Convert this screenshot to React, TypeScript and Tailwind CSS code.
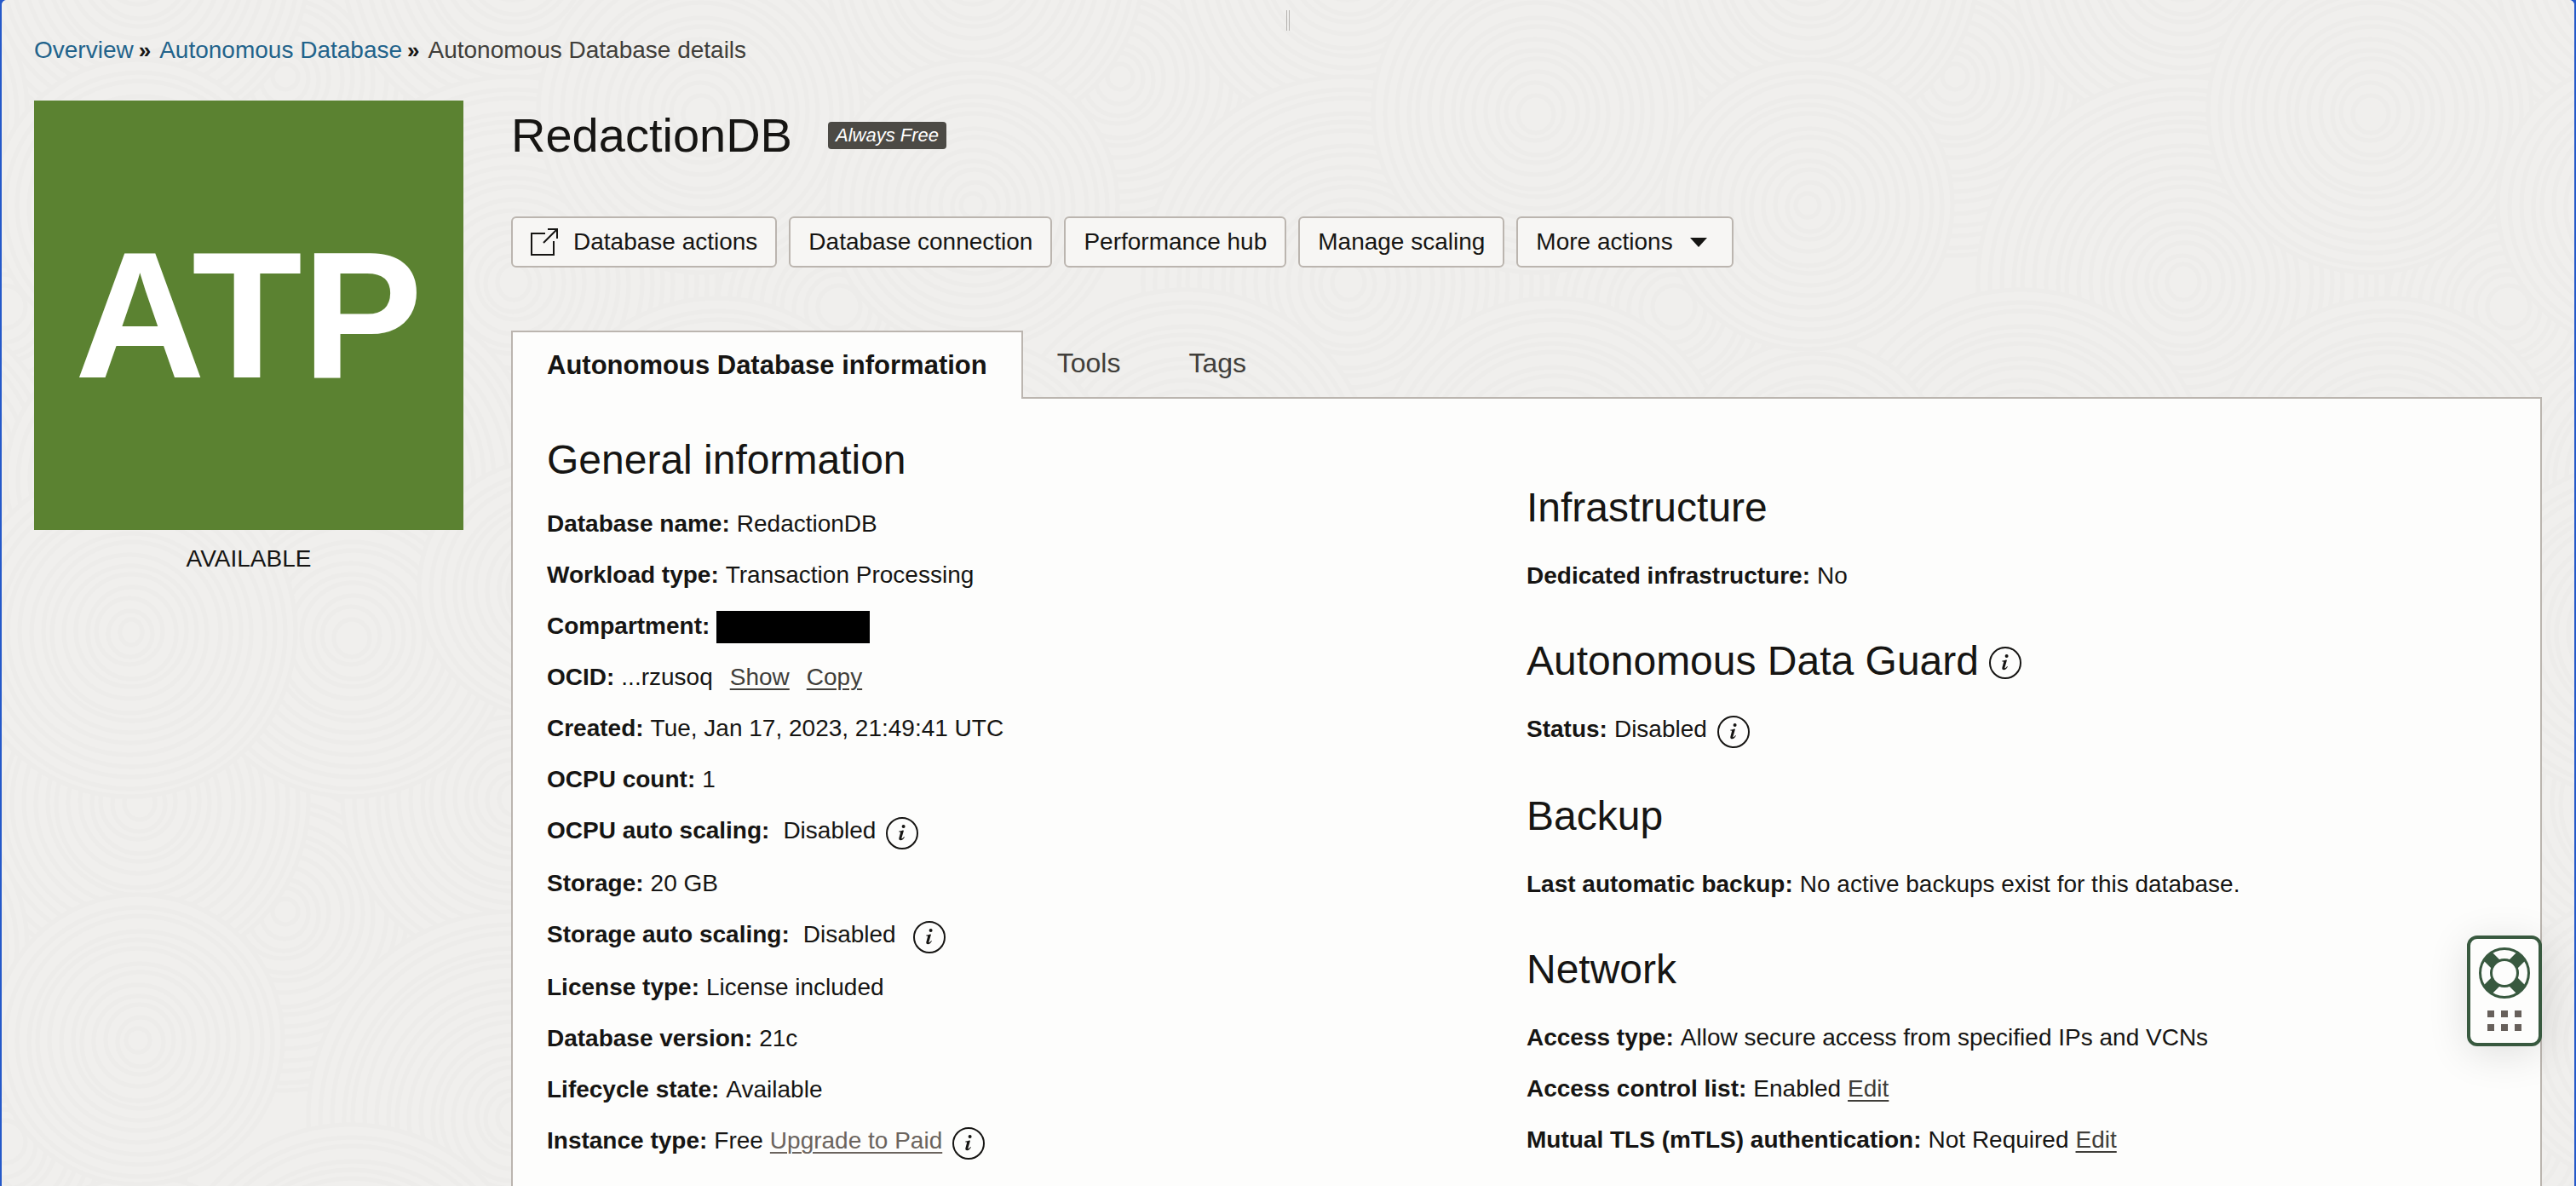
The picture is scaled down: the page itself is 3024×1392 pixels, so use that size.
import React from "react";

const TILE = 980;

const DISCS: [number, number, number][] = [
  [760, 860, 230],
  [330, 90, 210],
  [0, 360, 220],
  [600, 935, 200],
  [600, 330, 240],
  [160, 940, 200],
  [840, 560, 210],
  [410, 560, 220],
  [820, 130, 190],
  [165, 560, 160],
  [410, 745, 190],
  [150, 740, 195],
  [640, 690, 150],
  [160, 240, 170],
];

const WRAP = [-TILE, 0, TILE];

function Ripples() {
  return (
    <svg className="absolute inset-0 h-full w-full" aria-hidden="true">
      <defs>
        <pattern id="ripples" width={TILE} height={TILE} patternUnits="userSpaceOnUse">
          <rect width={TILE} height={TILE} fill="#f0efed" />
          {DISCS.map(([x, y, r], i) =>
            WRAP.map((dx) =>
              WRAP.map((dy) => (
                <g key={`${i}:${dx}:${dy}`} fill="#f0efed" stroke="#edecea" strokeWidth="5">
                  {Array.from({ length: Math.floor(r / 13) }, (_, n) => (
                    <ellipse
                      key={n}
                      cx={x + dx + ((n * 5) % 4)}
                      cy={y + dy + ((n * 3) % 5)}
                      rx={r - n * 13}
                      ry={r - n * 13 + (n % 3)}
                    />
                  ))}
                </g>
              )),
            ),
          )}
        </pattern>
      </defs>
      <rect width="100%" height="100%" fill="url(#ripples)" />
    </svg>
  );
}

function InfoButton({ label, className = "" }: { label: string; className?: string }) {
  return (
    <button type="button" aria-label={label} className={`size-[38px] shrink-0 ${className}`}>
      <svg viewBox="0 0 38 38" className="size-full" fill="none">
        <circle cx="19" cy="19" r="18" stroke="#161513" strokeWidth="2" />
        <circle cx="20.6" cy="11" r="2" fill="#161513" />
        <path
          d="M15.4 16.600c1.600-.1 3-.5 4.400-1.200l1.200.3-2.500 8.600c-.2.7 0 1 .4 1 .7 0 1.400-.9 2.200-2.200l.8.5c-1.200 2.200-2.700 3.700-4.600 3.700-1.600 0-2.300-1.100-1.900-2.700l1.600-6.200c.1-.6 0-.8-.5-.9l-1.200-.1z"
          fill="#161513"
        />
      </svg>
    </button>
  );
}

function TextLink({ children, muted = false }: { children: React.ReactNode; muted?: boolean }) {
  return (
    <a
      href="#"
      className={`underline decoration-2 underline-offset-4 ${muted ? "text-[#6b645e]" : "text-[#403e3a]"}`}
    >
      {children}
    </a>
  );
}

function Field({ label, children }: { label: string; children: React.ReactNode }) {
  return (
    <div className="mb-7 flex items-start whitespace-nowrap">
      <dt className="mr-2 font-bold">{label}:</dt>
      <dd className="flex items-start">{children}</dd>
    </div>
  );
}

function Section({ title, info, children }: { title: string; info?: string; children: React.ReactNode }) {
  return (
    <section className="pb-7">
      <div className="mb-9 flex items-center gap-3">
        <h2 className="text-[48px] leading-[56px]">{title}</h2>
        {info && <InfoButton label={info} className="mt-1" />}
      </div>
      <dl className="flow-root">{children}</dl>
    </section>
  );
}

function ActionButton({ children }: { children: React.ReactNode }) {
  return (
    <button
      type="button"
      className="flex h-[60px] items-center rounded-md border-2 border-[#bbb5af] bg-[#f7f6f4] px-[21px] whitespace-nowrap"
    >
      {children}
    </button>
  );
}

function HelpWidget() {
  return (
    <button
      type="button"
      aria-label="Support"
      className="fixed top-[1098px] right-10 flex h-[130px] w-[88px] flex-col items-center gap-3.5 rounded-xl border-4 border-[#38593f] bg-[#fdfdfc] pt-2.5 shadow-[0_8px_48px_rgba(0,0,0,0.12)]"
    >
      <svg viewBox="0 0 60 60" className="size-[60px]" fill="none">
        <g stroke="#38593f" strokeWidth="14">
          <path d="M9.500 9.500 20 20M50.500 9.500 40 20M9.500 50.500 20 40M50.500 50.500 40 40" />
        </g>
        <circle cx="30" cy="30" r="28.500" stroke="#38593f" strokeWidth="3" />
        <circle cx="30" cy="30" r="15.500" fill="#fdfdfc" stroke="#38593f" strokeWidth="3" />
      </svg>
      <span className="grid grid-cols-3 gap-2">
        {[0, 1, 2, 3, 4, 5].map((n) => (
          <span key={n} className="size-2 bg-[#67605b]" />
        ))}
      </span>
    </button>
  );
}

export default function App() {
  return (
    <div className="min-h-screen bg-[#2559c9] px-0.5 font-['Liberation_Sans',Arial,sans-serif] text-[28px] leading-8 text-[#161513]">
      <div className="relative flex min-h-screen flex-col overflow-hidden rounded-md bg-[#f0efed]">
        <Ripples />
        <div
          aria-hidden="true"
          className="absolute top-3 left-1/2 h-6 w-1 -translate-x-1/2 border-x border-[#b4b2af]"
        />
        <div className="relative flex grow flex-col px-[38px] pt-[43px]">
          <nav aria-label="Breadcrumb">
            <ol className="flex items-center">
              <li className="text-[#22638b]">
                <a href="#">Overview</a>
              </li>
              <li aria-hidden="true" className="mr-2.5 ml-1.5 text-[26px] font-bold">
                »
              </li>
              <li className="text-[#22638b]">
                <a href="#">Autonomous Database</a>
              </li>
              <li aria-hidden="true" className="mr-2.5 ml-1.5 text-[26px] font-bold">
                »
              </li>
              <li className="text-[#403e3a]">Autonomous Database details</li>
            </ol>
          </nav>

          <div className="mt-[43px] flex grow gap-14">
            <aside className="w-[504px] shrink-0 text-center">
              <div className="flex h-[504px] items-center justify-center bg-[#5b8231] text-[212px] leading-none font-bold text-white">
                ATP
              </div>
              <p className="mt-0.5 leading-[64px]">AVAILABLE</p>
            </aside>

            <main className="flex min-w-0 grow flex-col">
              <header className="flex items-center gap-[42px] pt-[9px]">
                <h1 className="text-[56px] leading-[64px]">RedactionDB</h1>
                <span className="rounded-sm bg-[#4c4a45] px-[9px] text-[22px] leading-8 text-white italic">
                  Always Free
                </span>
              </header>

              <div className="mt-[63px] flex gap-3.5">
                <ActionButton>
                  <svg viewBox="0 0 32 32" className="mr-[18px] size-8" fill="none" stroke="#161513" strokeWidth="2">
                    <path d="M17 6H1v25h26V15M15 17 30 2M20 1h11v11" />
                  </svg>
                  Database actions
                </ActionButton>
                <ActionButton>Database connection</ActionButton>
                <ActionButton>Performance hub</ActionButton>
                <ActionButton>Manage scaling</ActionButton>
                <ActionButton>
                  More actions
                  <svg viewBox="0 0 20 11" className="mr-2 ml-5 h-[11px] w-5" fill="#161513">
                    <path d="M0 0h20L10 11z" />
                  </svg>
                </ActionButton>
              </div>

              <div role="tablist" className="relative z-10 mt-[74px] -mb-0.5 flex text-[32px] text-[#403e3a]">
                <button
                  type="button"
                  role="tab"
                  aria-selected="true"
                  className="h-20 border-2 border-b-0 border-[#bbb5af] bg-[#fdfdfc] px-10 text-[31px] font-bold whitespace-nowrap text-[#161513]"
                >
                  Autonomous Database information
                </button>
                <button type="button" role="tab" aria-selected="false" className="h-[76px] px-10">
                  Tools
                </button>
                <button type="button" role="tab" aria-selected="false" className="h-[76px] px-10">
                  Tags
                </button>
              </div>

              <div
                role="tabpanel"
                className="grid grow grid-cols-2 border-2 border-b-0 border-[#bbb5af] bg-[#fdfdfc] px-10 pt-11"
              >
                <div>
                  <h2 className="mb-[31px] text-[48px] leading-[56px]">General information</h2>
                  <dl>
                    <Field label="Database name">RedactionDB</Field>
                    <Field label="Workload type">Transaction Processing</Field>
                    <Field label="Compartment">
                      <span className="-mt-0.5 -mb-1 h-[38px] w-[180px] bg-black" />
                    </Field>
                    <Field label="OCID">
                      ...rzusoq
                      <span className="ml-5 flex gap-5">
                        <TextLink>Show</TextLink>
                        <TextLink>Copy</TextLink>
                      </span>
                    </Field>
                    <Field label="Created">Tue, Jan 17, 2023, 21:49:41 UTC</Field>
                    <Field label="OCPU count">1</Field>
                    <Field label="OCPU auto scaling">
                      <span className="mr-3 ml-2">Disabled</span>
                      <InfoButton label="About OCPU auto scaling" className="-mb-1" />
                    </Field>
                    <Field label="Storage">20 GB</Field>
                    <Field label="Storage auto scaling">
                      <span className="mr-5 ml-2">Disabled</span>
                      <InfoButton label="About storage auto scaling" className="-mb-1" />
                    </Field>
                    <Field label="License type">License included</Field>
                    <Field label="Database version">21c</Field>
                    <Field label="Lifecycle state">Available</Field>
                    <Field label="Instance type">
                      <span className="mr-3 flex gap-2">
                        Free <TextLink muted>Upgrade to Paid</TextLink>
                      </span>
                      <InfoButton label="About instance type" className="-mb-1" />
                    </Field>
                  </dl>
                </div>

                <div className="pt-14">
                  <Section title="Infrastructure">
                    <Field label="Dedicated infrastructure">No</Field>
                  </Section>
                  <Section title="Autonomous Data Guard" info="About Autonomous Data Guard">
                    <Field label="Status">
                      <span className="mr-3">Disabled</span>
                      <InfoButton label="About Data Guard status" className="-mb-1" />
                    </Field>
                  </Section>
                  <Section title="Backup">
                    <Field label="Last automatic backup">No active backups exist for this database.</Field>
                  </Section>
                  <Section title="Network">
                    <Field label="Access type">Allow secure access from specified IPs and VCNs</Field>
                    <Field label="Access control list">
                      <span className="flex gap-2">
                        Enabled <TextLink>Edit</TextLink>
                      </span>
                    </Field>
                    <Field label="Mutual TLS (mTLS) authentication">
                      <span className="flex gap-2">
                        Not Required <TextLink>Edit</TextLink>
                      </span>
                    </Field>
                  </Section>
                </div>
              </div>
            </main>
          </div>
        </div>
      </div>
      <HelpWidget />
    </div>
  );
}
